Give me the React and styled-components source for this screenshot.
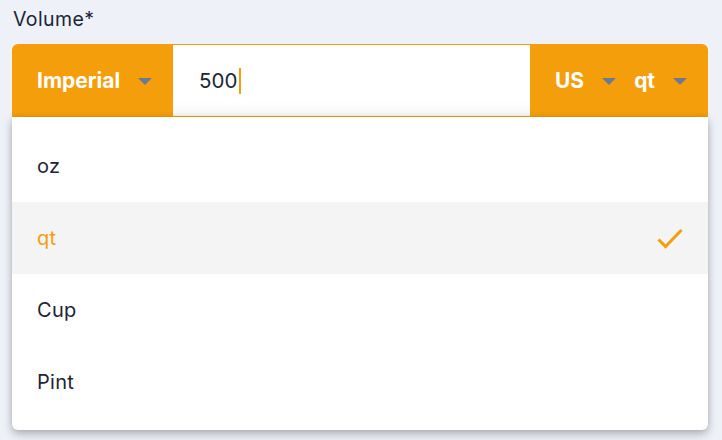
import React, { useState } from "react";
import styled, { createGlobalStyle } from "styled-components";

const GlobalStyle = createGlobalStyle`
  html, body {
    margin: 0;
    padding: 0;
    background: #eef2f8;
    font-family: Inter, "Noto Sans", sans-serif;
  }
`;

const ORANGE = "#f49e0c";

const Page = styled.div`
  padding: 6px 14px 0 12px;
  height: 440px;
  box-sizing: border-box;
`;
const Label = styled.label`
  display: block;
  margin: 0 0 12px 1px;
  font-size: 19.5px;
  line-height: 26px;
  letter-spacing: 0.4px;
  color: #1b2536;
`;
const Field = styled.div`
  position: relative;
`;
const Group = styled.div`
  display: flex;
  height: 73px;
  border-radius: 6px 6px 0 0;
  overflow: hidden;
`;
const Addon = styled.div`
  display: flex;
  align-items: center;
  gap: 18px;
  padding: 0 ${(p) => p.right || 18}px 0 25px;
  background: ${ORANGE};
  color: #fff;
  font-size: 21px;
  font-weight: 700;
  flex-shrink: 0;
  width: ${(p) => p.width}px;
  box-sizing: border-box;
`;
const Part = styled.span`
  display: flex;
  align-items: center;
  gap: 18px;
`;
const Caret = styled.span`
  width: 0;
  height: 0;
  border-left: 7px solid transparent;
  border-right: 7px solid transparent;
  border-top: 7px solid #6b7a90;
  margin-top: 1px;
`;
const Input = styled.div`
  flex: 1;
  display: flex;
  align-items: center;
  padding-left: 26px;
  background: linear-gradient(#fff 80%, #f6f6f7);
  border-top: 1px solid ${ORANGE};
  border-bottom: 1px solid ${ORANGE};
  font-size: 20.5px;
  color: #1b2536;
`;
const Cursor = styled.span`
  display: inline-block;
  width: 1.5px;
  height: 26px;
  margin-left: 2px;
  background: ${ORANGE};
`;
const Menu = styled.ul`
  position: absolute;
  top: 100%;
  left: 0;
  right: 0;
  margin: 0;
  padding: 13px 0 12px;
  list-style: none;
  background: #fff;
  border-radius: 0 0 6px 6px;
  box-shadow: 0 4px 10px rgba(0, 0, 0, 0.28), 0 0 4px rgba(0, 0, 0, 0.08);
`;
const Item = styled.li`
  display: flex;
  align-items: center;
  justify-content: space-between;
  height: 72px;
  padding: 0 25px 0 25px;
  font-size: 20px;
  letter-spacing: 0.3px;
  color: ${(p) => (p.selected ? ORANGE : "#1b2536")};
  background: ${(p) => (p.selected ? "#f4f4f4" : "#fff")};
`;

const Check = () => (
  <svg width="26" height="21" viewBox="0 0 26 21">
    <path d="M1.5 11.5 L8.5 18.5 L24.5 2" fill="none" stroke={ORANGE} strokeWidth="3" />
  </svg>
);

export default function App() {
  const [unit] = useState("qt");
  const units = ["oz", "qt", "Cup", "Pint"];
  return (
    <>
      <GlobalStyle />
      <Page>
        <Label>Volume*</Label>
        <Field>
          <Group>
            <Addon width={161}>
              Imperial
              <Caret />
            </Addon>
            <Input>
              500
              <Cursor />
            </Input>
            <Addon width={178} right={19}>
              <Part>
                US
                <Caret />
              </Part>
              <Part>
                {unit}
                <Caret />
              </Part>
            </Addon>
          </Group>
          <Menu>
            {units.map((u) => (
              <Item key={u} selected={u === unit}>
                {u}
                {u === unit && <Check />}
              </Item>
            ))}
          </Menu>
        </Field>
      </Page>
    </>
  );
}
